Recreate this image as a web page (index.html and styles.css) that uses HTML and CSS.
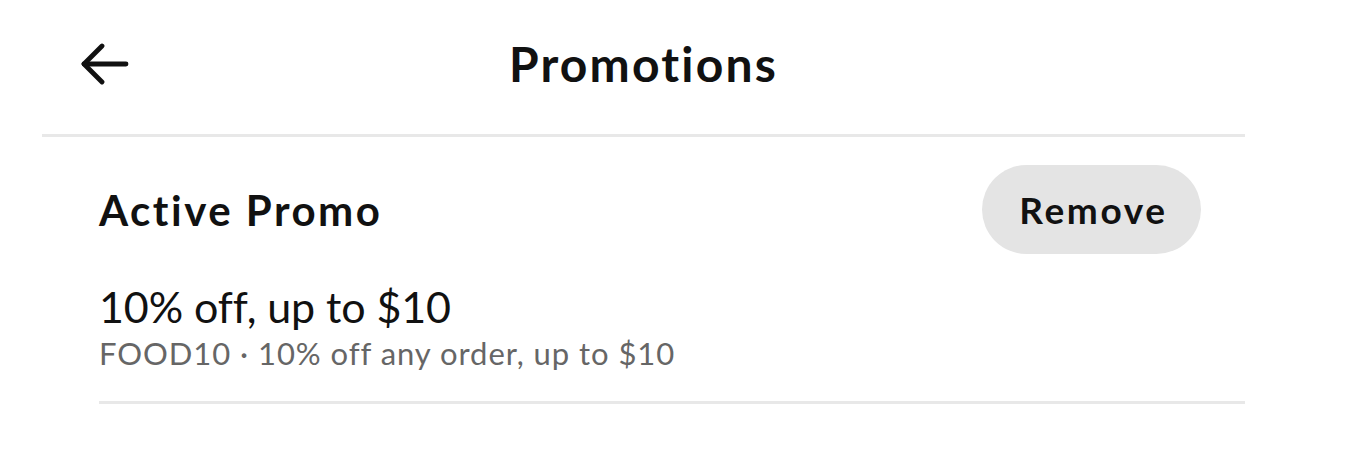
FILE: index.html
```html
<!DOCTYPE html>
<html>
<head>
<meta charset="utf-8">
<link rel="stylesheet" href="styles.css">
</head>
<body>
<div class="page">
  <header class="header">
    <button class="back" aria-label="Back">
      <svg width="48" height="42" viewBox="0 0 48 42" fill="none" stroke="#111" stroke-width="4.8" stroke-linecap="round" stroke-linejoin="round">
        <path d="M3 21 H45"/>
        <path d="M21 3 L3 21 L21 39"/>
      </svg>
    </button>
    <h1 class="title">Promotions</h1>
  </header>
  <section class="promo">
    <div class="promo-head">
      <h2 class="promo-label">Active Promo</h2>
      <button class="remove">Remove</button>
    </div>
    <div class="promo-body">
      <div class="promo-title">10% off, up to $10</div>
      <div class="promo-desc">FOOD10 · 10% off any order, up to $10</div>
    </div>
  </section>
</div>
</body>
</html>
```
FILE: styles.css
```css
* { box-sizing: border-box; }
html, body { margin: 0; padding: 0; background: #fff; }
body { font-family: "Lato", "Inter", sans-serif; color: #111; }
.page { margin-left: 42px; width: 1203px; }
.header {
  position: relative;
  height: 137px;
  border-bottom: 3px solid #e8e8e8;
  display: flex;
  align-items: flex-start;
  justify-content: center;
}
.back {
  position: absolute;
  left: 39px;
  top: 43px;
  padding: 0;
  border: 0;
  background: none;
  display: flex;
}
.title {
  margin: 0;
  margin-top: 34px;
  font-size: 48px;
  font-weight: 700;
  line-height: 60px;
  letter-spacing: 2.2px;
}
.promo { margin-left: 57px; border-bottom: 3px solid #e8e8e8; padding-bottom: 27px; }
.promo-head {
  display: flex;
  justify-content: space-between;
  align-items: center;
  margin-top: 28px;
  padding-right: 44px;
}
.promo-label { margin: 0; font-size: 42px; font-weight: 700; letter-spacing: 2.5px; }
.remove {
  width: 219px;
  height: 89px;
  border: 0;
  border-radius: 45px;
  background: #e4e4e4;
  font-family: inherit;
  font-size: 37px;
  font-weight: 700;
  color: #111;
  letter-spacing: 2.6px;
  padding: 0 0 0 4px;
}
.promo-body { margin-top: 28px; }
.promo-title { font-size: 43px; line-height: 50px; letter-spacing: -0.1px; }
.promo-desc { font-size: 31px; line-height: 42px; color: #666; letter-spacing: 0.95px; }
```
